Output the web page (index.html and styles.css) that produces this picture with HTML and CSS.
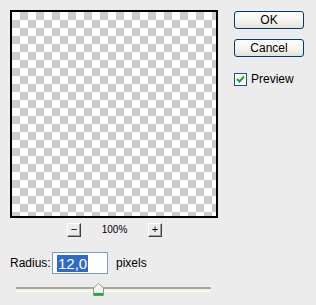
FILE: index.html
```html
<!DOCTYPE html>
<html>
<head>
<meta charset="utf-8">
<link rel="stylesheet" href="styles.css">
</head>
<body>
<div class="dialog">
  <div class="left">
    <div class="preview"></div>
    <div class="zoom-row">
      <button class="zbtn">&minus;</button>
      <span class="zoom-val">100%</span>
      <button class="zbtn">+</button>
    </div>
    <div class="radius-row">
      <span class="lbl">Radius:</span>
      <div class="field"><span class="sel">12,0</span></div>
      <span class="unit">pixels</span>
    </div>
    <div class="slider">
      <div class="track"></div>
      <svg class="thumb" width="11" height="13" viewBox="0 0 11 13">
        <defs>
          <linearGradient id="tg" x1="0" y1="0" x2="0" y2="1">
            <stop offset="0" stop-color="#ffffff"/>
            <stop offset="1" stop-color="#e6e6e0"/>
          </linearGradient>
        </defs>
        <path d="M0.5 5 L5.5 0.5 L10.5 5 L10.5 12.5 L0.5 12.5 Z" fill="url(#tg)" stroke="#8e9a92"/>
        <rect x="1" y="10" width="9" height="2.5" fill="#21a830"/>
      </svg>
    </div>
  </div>
  <div class="right">
    <button class="btn">OK</button>
    <button class="btn">Cancel</button>
    <label class="check">
      <span class="box">
        <svg width="9" height="9" viewBox="0 0 9 9"><path d="M1 4 L3.5 6.5 L8 1.5" fill="none" stroke="#21a121" stroke-width="2"/></svg>
      </span>
      <span>Preview</span>
    </label>
  </div>
</div>
</body>
</html>
```
FILE: styles.css
```css
html, body {
  margin: 0;
  padding: 0;
  background: #ececec;
  width: 316px;
  height: 305px;
  overflow: hidden;
}
.dialog {
  display: flex;
  padding: 10px 0 0 10px;
  font-family: "Liberation Sans", Arial, sans-serif;
  font-size: 11px;
  color: #000;
}
.left {
  width: 208px;
  display: flex;
  flex-direction: column;
}
.preview {
  width: 204px;
  height: 204px;
  border: 2px solid #000;
  background-color: #fff;
  background-image: conic-gradient(#cccccc 0 25%, #ffffff 0 50%, #cccccc 0 75%, #ffffff 0);
  background-size: 16px 16px;
}
.zoom-row {
  display: flex;
  align-items: center;
  margin-top: 5px;
  padding-left: 57px;
  height: 13px;
}
.zbtn {
  width: 14px;
  height: 14px;
  padding: 0 0 1px 0;
  margin: 0;
  border: 1px solid;
  border-color: #ffffff #404040 #404040 #ffffff;
  box-shadow: inset -1px -1px 0 #a0a0a0;
  background: #ececec;
  font-family: "Liberation Sans", Arial, sans-serif;
  font-size: 11px;
  line-height: 11px;
  color: #000;
}
.zoom-val {
  width: 67px;
  text-align: center;
  font-size: 10px;
}
.radius-row {
  display: flex;
  align-items: center;
  margin-top: 16px;
  height: 22px;
}
.lbl {
  width: 42px;
  font-size: 12px;
}
.field {
  width: 50px;
  height: 20px;
  border: 1px solid #7f9db9;
  background: #fff;
  display: flex;
  align-items: center;
  padding-left: 4px;
  box-sizing: content-box;
  font-size: 15px;
}
.sel {
  background: #316ac5;
  color: #fff;
  padding: 0 1px;
  line-height: 17px;
}
.unit {
  margin-left: 8px;
  font-size: 12px;
}
.slider {
  position: relative;
  margin-top: 13px;
  margin-left: 6px;
  width: 195px;
  height: 6px;
}
.track {
  height: 5px;
  box-sizing: border-box;
  border-top: 2px solid #a7a69d;
  border-bottom: 1px solid #ffffff;
  background: #f4f2e8;
  border-radius: 1px;
}
.thumb {
  position: absolute;
  left: 77px;
  top: -4px;
  display: block;
}
.right {
  margin-left: 16px;
  display: flex;
  flex-direction: column;
}
.btn {
  width: 70px;
  height: 18px;
  margin: 1px 0 0 0;
  padding: 0;
  border: 1px solid #003c74;
  border-radius: 3px;
  background: linear-gradient(#ffffff, #f3f3ee 60%, #e4e2d6);
  font-family: "Liberation Sans", Arial, sans-serif;
  font-size: 12px;
  color: #000;
}
.btn + .btn {
  margin-top: 10px;
}
.check {
  display: flex;
  align-items: center;
  margin-top: 15px;
  font-size: 12px;
}
.box {
  width: 11px;
  height: 11px;
  border: 1px solid #1c5180;
  background: #fff;
  display: flex;
  align-items: center;
  justify-content: center;
  margin-right: 4px;
}
.box svg {
  display: block;
}
```
